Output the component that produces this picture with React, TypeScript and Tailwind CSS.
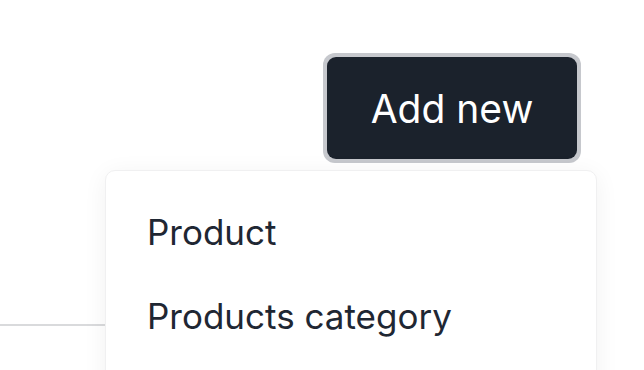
import React from "react";

export default function App() {
  return (
    <div className="relative w-[644px] h-[370px] bg-white overflow-hidden" style={{ fontFamily: "Inter, 'Noto Sans', sans-serif" }}>
      <div className="flex justify-end pt-[53px] pr-[63px]">
        <div className="rounded-[12px] bg-[#c6c8cd] p-[4px]">
          <button className="flex items-center justify-center w-[250px] h-[102px] rounded-[9px] bg-[#1b222c] text-white text-[39px] leading-none">
            Add new
          </button>
        </div>
      </div>
      <div className="mt-[161px] w-[120px] h-[2px] bg-[#d9dadc]" />
      <div className="absolute left-[105px] top-[170px] w-[492px] h-[240px] rounded-[10px] bg-white border border-[#f0f0f1] shadow-[0_4px_24px_rgba(0,0,0,0.06)] pt-[19px] text-[#1f2733]">
        <div className="h-[84px] flex items-center pl-[41px] text-[35px]">Product</div>
        <div className="h-[84px] flex items-center pl-[41px] text-[35px]">Products category</div>
      </div>
    </div>
  );
}
